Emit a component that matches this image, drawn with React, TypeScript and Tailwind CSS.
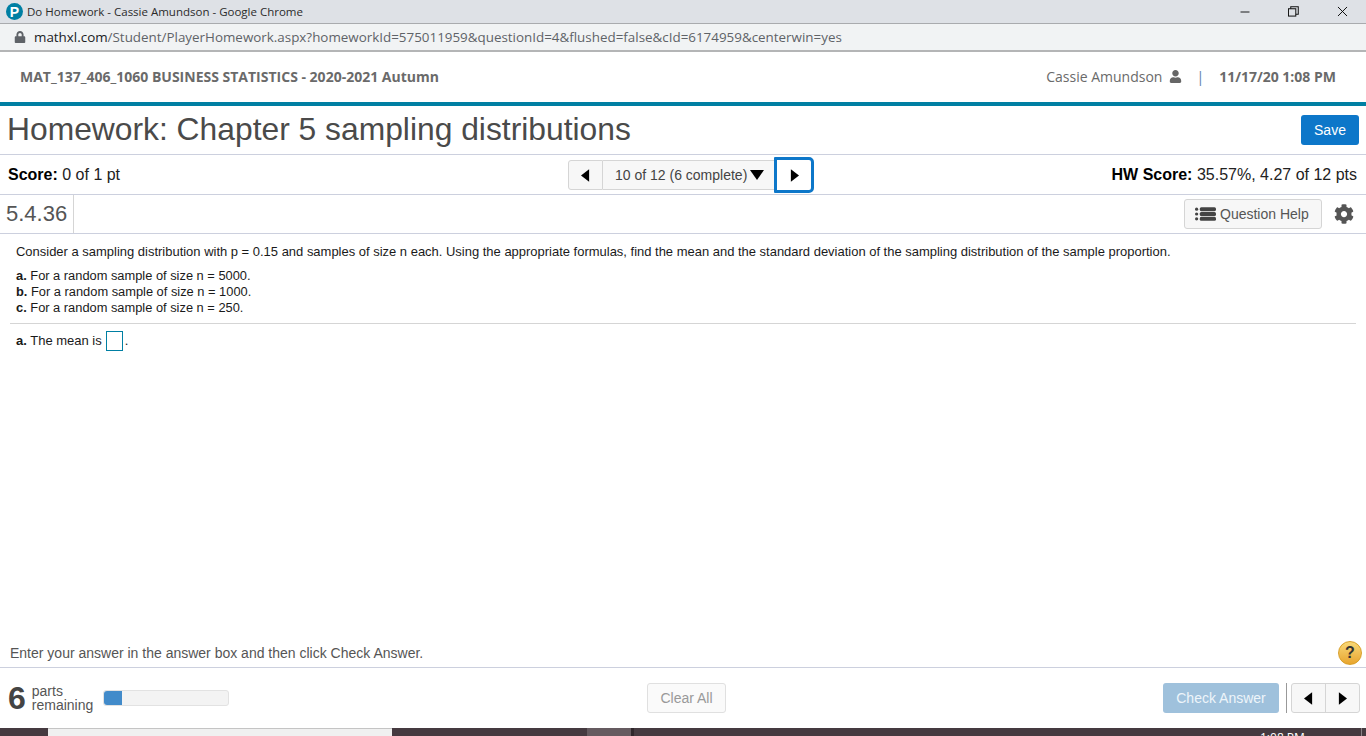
import React from 'react';
import { Minus, X } from 'lucide-react';
import { FaCog, FaLock, FaUser } from 'react-icons/fa';

const Left = ({ className = '' }: { className?: string }) => (
  <svg viewBox="0 0 10 14" className={className}><path d="M9 0v14L0 7z" fill="#000" /></svg>
);
const Right = ({ className = '' }: { className?: string }) => (
  <svg viewBox="0 0 10 14" className={className}><path d="M1 0v14l9-7z" fill="#000" /></svg>
);

const App: React.FC = () => {
  return (
    <div className="h-[736px] w-[1366px] flex flex-col overflow-hidden bg-white font-['Liberation_Sans',Arial,sans-serif] text-[#333]">
      {/* window title */}
      <div className="h-6 shrink-0 flex items-center bg-[#dee1e6] border-b border-[#a9abae] pl-[6px]">
        <div className="w-[17px] h-[17px] rounded-full bg-[#007fa3] flex items-center justify-center text-white text-[14px] font-bold leading-none">P</div>
        <span className="ml-[4px] text-[11.5px] text-[#2b2b2b] font-['Open_Sans',sans-serif]">Do Homework - Cassie Amundson - Google Chrome</span>
        <div className="ml-auto flex items-center text-black">
          <Minus className="w-[14px] h-[14px] mr-[36px]" strokeWidth={1.5} />
          <svg viewBox="0 0 12 12" className="w-[11px] h-[11px] mr-[35px]" fill="none" stroke="#111" strokeWidth="1.1"><rect x="0.5" y="3" width="8" height="8" /><path d="M3 3V.8h8.2V9H8.5" /></svg>
          <X className="w-[17px] h-[17px] mr-[15px]" strokeWidth={1.3} />
        </div>
      </div>
      {/* address bar */}
      <div className="h-7 shrink-0 flex items-center bg-[#f1f3f4] border-b-2 border-[#b4b5b6] pl-[14px] text-[13.4px] font-['Open_Sans',sans-serif]">
        <FaLock className="w-[12px] h-[12px] text-[#5f6368]" />
        <span className="ml-[8px] text-[#202124]">mathxl.com</span>
        <span className="text-[#5f6368]">/Student/PlayerHomework.aspx?homeworkId=575011959&amp;questionId=4&amp;flushed=false&amp;cId=6174959&amp;centerwin=yes</span>
      </div>
      {/* course header */}
      <div className="h-[50px] shrink-0 flex items-center justify-between pl-[20px] pr-[30px] pb-[2px] text-[14px] text-[#6a6a6a] font-['Open_Sans',sans-serif]">
        <span className="font-bold">MAT_137_406_1060 BUSINESS STATISTICS - 2020-2021 Autumn</span>
        <div className="flex items-center">
          <span>Cassie Amundson</span>
          <FaUser className="ml-[7px] w-[13px] h-[13px] text-[#666]" />
          <span className="ml-[14px] text-[#5a7ba8]">|</span>
          <span className="ml-[15px] font-bold">11/17/20 1:08 PM</span>
        </div>
      </div>
      <div className="h-1 shrink-0 bg-[#007fa3]" />
      {/* title */}
      <div className="h-[49px] shrink-0 flex items-center justify-between px-[7px] border-b border-[#ccd0de]">
        <h1 className="text-[31.8px] leading-none text-[#4a4a4a] -mt-[1px]">Homework: Chapter 5 sampling distributions</h1>
        <button className="w-[58px] h-[30px] rounded-[3px] bg-[#0d77c9] text-white text-[14px]">Save</button>
      </div>
      {/* score row */}
      <div className="h-10 shrink-0 relative flex items-center justify-between pl-[8px] pr-[9px] border-b border-[#ccd0de] text-[16px] text-[#222]">
        <div><b className="text-black">Score:</b> 0 of 1 pt</div>
        <div className="absolute left-[568px] top-[2px] flex items-center h-[36px]">
          <div className="h-[30px] w-[35px] flex items-center justify-center bg-[#f7f7f7] border border-[#d5d5d5] rounded-l-[3px]"><Left className="w-[9px] h-[13px]" /></div>
          <div className="h-[30px] w-[171px] flex items-center pl-[12px] bg-[#f7f7f7] border-y border-[#d5d5d5] text-[14px] text-[#444]">
            10 of 12 (6 complete)
            <svg viewBox="0 0 14 10" className="ml-[3px] w-[14px] h-[10px]"><path d="M0 0h14L7 10z" fill="#000" /></svg>
          </div>
          <div className="h-[36px] w-[40px] flex items-center justify-center bg-white border-[3px] border-[#0d77c9] rounded-r-[5px] rounded-l-[1px]"><Right className="w-[9px] h-[13px]" /></div>
        </div>
        <div><b className="text-black">HW Score:</b> 35.57%, 4.27 of 12 pts</div>
      </div>
      {/* question id */}
      <div className="h-[39px] shrink-0 flex items-center border-b border-[#ccd0de] pr-[12px]">
        <div className="h-full w-[74px] pl-[6px] pb-[2px] flex items-center border-r border-[#d5d5d5] text-[22px] text-[#555]">5.4.36</div>
        <button className="ml-auto h-[30px] w-[138px] flex items-center pl-[10px] gap-[4px] bg-[#f7f7f7] border border-[#d5d5d5] rounded-[3px] text-[14px] text-[#555]">
          <svg viewBox="0 0 22 14" className="w-[21px] h-[14px]" fill="#444"><circle cx="1.7" cy="2" r="1.7" /><circle cx="1.7" cy="7" r="1.7" /><circle cx="1.7" cy="12" r="1.7" /><rect x="5" y="0" width="17" height="4" rx="1.6" /><rect x="5" y="5" width="17" height="4" rx="1.6" /><rect x="5" y="10" width="17" height="4" rx="1.6" /></svg>
          Question Help
        </button>
        <FaCog className="ml-[12px] w-[20px] h-[20px] text-[#555]" />
      </div>
      {/* question body */}
      <div className="flex-1 min-h-0 flex flex-col text-[13px] text-[#1a1a1a]">
        <div className="mx-[10px] pl-[6px] pt-[9px] pb-[7px] border-b border-[#d5d5d5]">
          <p className="leading-[18px] text-[12.98px]">Consider a sampling distribution with p = 0.15 and samples of size n each. Using the appropriate formulas, find the mean and the standard deviation of the sampling distribution of the sample proportion.</p>
          <div className="mt-[7px] leading-4 text-[12.85px]">
            <p><b>a.</b> For a random sample of size n = 5000.</p>
            <p><b>b.</b> For a random sample of size n = 1000.</p>
            <p><b>c.</b> For a random sample of size n = 250.</p>
          </div>
        </div>
        <div className="ml-[16px] mt-[7px] flex items-center h-[20px]">
          <span><b>a.</b> The mean is</span>
          <span className="ml-[4px] w-[17px] h-[20px] border border-[#007fa3]" />
          <span className="ml-[2px]">.</span>
        </div>
        <div className="mt-auto h-[29px] pt-px flex items-center justify-between pl-[10px] pr-[4px] text-[14px] text-[#555]">
          <span>Enter your answer in the answer box and then click Check Answer.</span>
          <div className="w-[24px] h-[24px] rounded-full bg-linear-to-b from-[#f8d875] to-[#e8a52c] border border-[#d9a02a] flex items-center justify-center text-[16px] font-bold text-[#333]">?</div>
        </div>
      </div>
      {/* footer */}
      <div className="h-[61px] shrink-0 flex items-center border-t border-[#ccd0de] pl-[8px] pr-[6px] relative">
        <span className="text-[32px] font-bold leading-none text-[#444]">6</span>
        <div className="ml-[6px] text-[14px] leading-[14px] text-[#555]">parts<br />remaining</div>
        <div className="ml-[10px] -mt-[1px] w-[126px] h-4 rounded-[3px] bg-[#f3f3f3] border border-[#e2e2e2]">
          <div className="h-full w-[18px] rounded-l-[3px] bg-[#428bca]" />
        </div>
        <button className="absolute left-[647px] top-[15px] w-[79px] h-[30px] bg-[#fafafa] border border-[#e0e0e0] rounded-[3px] text-[14px] text-[#999]">Clear All</button>
        <button className="ml-auto w-[116px] h-[30px] rounded-[3px] bg-[#9fc1dc] text-[14px] text-[#eef5fa]">Check Answer</button>
        <div className="ml-[7px] w-px h-[30px] bg-[#999]" />
        <div className="ml-[4px] w-[69px] h-[30px] flex bg-[#f7f7f7] border border-[#d5d5d5] rounded-[3px]">
          <div className="flex-1 flex items-center justify-center border-r border-[#d5d5d5]"><Left className="w-[9px] h-[13px]" /></div>
          <div className="flex-1 flex items-center justify-center"><Right className="w-[9px] h-[13px]" /></div>
        </div>
      </div>
      {/* desktop taskbar edge */}
      <div className="h-2 shrink-0 flex bg-[#453a40] relative">
        <div className="ml-[48px] w-[344px] h-full bg-[#f0f0f0] border-t border-[#c4c4c4]" />
        <div className="ml-[195px] w-[44px] h-full bg-[#655b60]" />
        <div className="w-[3px] h-full bg-[#2f272b]" />
        <span className="absolute left-[1260px] top-[4px] text-[12px] leading-none text-white font-['Open_Sans',sans-serif]">1:08 PM</span>
        <div className="ml-auto mr-[4px] w-px h-full bg-[#8a8286]" />
      </div>
    </div>
  );
};

export default App;
